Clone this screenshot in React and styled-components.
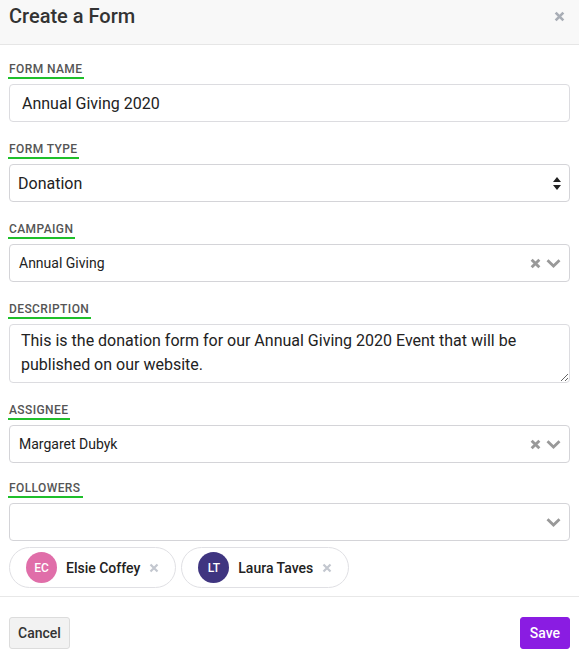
import React from "react";
import styled, { createGlobalStyle } from "styled-components";

const GlobalStyle = createGlobalStyle`
  html, body {
    margin: 0;
    padding: 0;
    background: #ffffff;
    font-family: Roboto, "Liberation Sans", sans-serif;
  }
  * {
    box-sizing: border-box;
  }
`;

const Modal = styled.div`
  width: 579px;
  min-height: 655px;
  background: #fff;
  display: flex;
  flex-direction: column;
`;

const Header = styled.div`
  height: 45px;
  padding: 4px 9px 0;
  display: flex;
  justify-content: space-between;
  align-items: flex-start;
  background: #f8f8f8;
  border-bottom: 1px solid #e6e6e6;
`;

const Title = styled.h2`
  margin: 0;
  font-size: 20px;
  line-height: 24px;
  font-weight: 500;
  color: #333;
`;

const CloseButton = styled.button`
  margin: 7px 5px 0 0;
  padding: 0;
  border: none;
  background: none;
  color: #a9aeb6;
  display: flex;
  cursor: pointer;
`;

const Body = styled.div`
  padding: 17px 9px 8px;
  display: flex;
  flex-direction: column;
`;

const Field = styled.div`
  display: flex;
  flex-direction: column;
  align-items: flex-start;
  margin-top: ${({ $top }) => $top ?? 20}px;
`;

const Label = styled.label`
  display: inline-block;
  margin-left: -1px;
  padding: 0 2px 1px 1px;
  font-size: 12px;
  line-height: 14px;
  font-weight: 500;
  letter-spacing: 0.4px;
  text-transform: uppercase;
  color: #555;
  border-bottom: 2px solid #1fbf2b;
  margin-bottom: 5px;
`;

const TextInput = styled.input`
  width: 100%;
  height: 38px;
  padding: 0 ${({ $pad }) => $pad || 12}px;
  border: 1px solid #dcdce0;
  border-radius: 4px;
  font-family: inherit;
  font-size: 16px;
  color: #222;
  outline: none;
`;

const Box = styled.div`
  width: 100%;
  height: 38px;
  padding: 0 8px 0 ${({ $pad }) => $pad || 9}px;
  border: 1px solid #d4d4d8;
  border-radius: 4px;
  display: flex;
  align-items: center;
  justify-content: space-between;
  font-size: ${({ $size }) => $size || 14}px;
  color: #222;
`;

const Controls = styled.div`
  display: flex;
  align-items: center;
  gap: 5px;
  color: #999;
`;

const TextArea = styled.textarea`
  width: 100%;
  height: 59px;
  padding: 4px 11px 2px;
  border: 1px solid #dcdce0;
  border-radius: 4px;
  font-family: inherit;
  font-size: 16px;
  line-height: 24px;
  color: #222;
  resize: vertical;
  outline: none;
`;

const ChipRow = styled.div`
  display: flex;
  gap: 5px;
  margin-top: 6px;
`;

const Chip = styled.div`
  height: 41px;
  padding: 0 16px 0 16px;
  border: 1px solid #e0e0e4;
  border-radius: 21px;
  display: flex;
  align-items: center;
`;

const Avatar = styled.span`
  width: 31px;
  height: 31px;
  border-radius: 50%;
  background: ${({ $color }) => $color};
  color: #fff;
  font-size: 12px;
  font-weight: 500;
  display: flex;
  align-items: center;
  justify-content: center;
  margin-right: 9px;
`;

const ChipName = styled.span`
  font-size: 14px;
  font-weight: 500;
  color: #222;
  margin-right: 9px;
`;

const ChipRemove = styled.span`
  color: #c3c7cf;
  display: flex;
`;

const Footer = styled.div`
  border-top: 1px solid #e8e8e8;
  padding: 20px 9px 7px;
  display: flex;
  justify-content: space-between;
`;

const Button = styled.button`
  height: 32px;
  padding: 0 ${({ $primary }) => ($primary ? 9 : 8)}px;
  border-radius: 3px;
  border: 1px solid ${({ $primary }) => ($primary ? "#8a1ce2" : "#dcdcdc")};
  background: ${({ $primary }) => ($primary ? "#8a1ce2" : "#f2f2f2")};
  color: ${({ $primary }) => ($primary ? "#fff" : "#333")};
  font-family: inherit;
  font-size: 14px;
  font-weight: 500;
  cursor: pointer;
`;

const Times = ({ size = 10, stroke = 2.6 }) => (
  <svg width={size} height={size} viewBox="0 0 10 10">
    <path
      d="M1.5 1.5 L8.5 8.5 M8.5 1.5 L1.5 8.5"
      stroke="currentColor"
      strokeWidth={stroke}
    />
  </svg>
);

const Chevron = () => (
  <svg width="15" height="10" viewBox="0 0 15 10">
    <path
      d="M1.5 2.2 L7.5 8 L13.5 2.2"
      fill="none"
      stroke="currentColor"
      strokeWidth="2.8"
    />
  </svg>
);

const UpDown = () => (
  <svg width="8" height="13" viewBox="0 0 8 13">
    <path d="M4 0 L8 5 L0 5 Z M4 13 L8 8 L0 8 Z" fill="#222" />
  </svg>
);

const followers = [
  { initials: "EC", name: "Elsie Coffey", color: "#e06ea9" },
  { initials: "LT", name: "Laura Taves", color: "#3f3580" },
];

export default function App() {
  return (
    <Modal>
      <GlobalStyle />
      <Header>
        <Title>Create a Form</Title>
        <CloseButton aria-label="Close">
          <Times size={11} stroke={2.4} />
        </CloseButton>
      </Header>
      <Body>
        <Field $top={0}>
          <Label>Form Name</Label>
          <TextInput defaultValue="Annual Giving 2020" />
        </Field>
        <Field>
          <Label>Form Type</Label>
          <Box $pad={8} $size={16}>
            <span>Donation</span>
            <Controls>
              <UpDown />
            </Controls>
          </Box>
        </Field>
        <Field>
          <Label>Campaign</Label>
          <Box>
            <span>Annual Giving</span>
            <Controls>
              <Times size={11} />
              <Chevron />
            </Controls>
          </Box>
        </Field>
        <Field>
          <Label>Description</Label>
          <TextArea defaultValue="This is the donation form for our Annual Giving 2020 Event that will be published on our website." />
        </Field>
        <Field>
          <Label>Assignee</Label>
          <Box>
            <span>Margaret Dubyk</span>
            <Controls>
              <Times size={11} />
              <Chevron />
            </Controls>
          </Box>
        </Field>
        <Field $top={18}>
          <Label>Followers</Label>
          <Box>
            <span />
            <Controls>
              <Chevron />
            </Controls>
          </Box>
          <ChipRow>
            {followers.map((f) => (
              <Chip key={f.initials}>
                <Avatar $color={f.color}>{f.initials}</Avatar>
                <ChipName>{f.name}</ChipName>
                <ChipRemove>
                  <Times size={10} stroke={2.2} />
                </ChipRemove>
              </Chip>
            ))}
          </ChipRow>
        </Field>
      </Body>
      <Footer>
        <Button>Cancel</Button>
        <Button $primary>Save</Button>
      </Footer>
    </Modal>
  );
}
